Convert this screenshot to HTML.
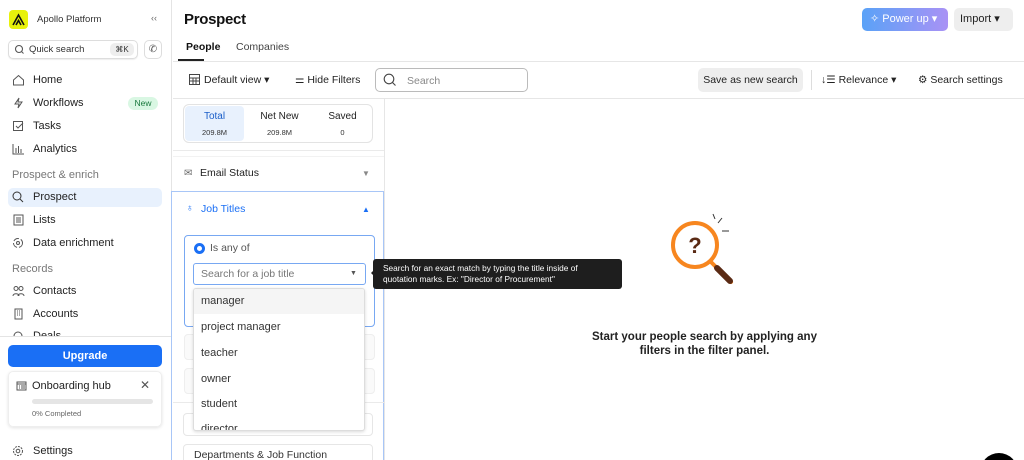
<!DOCTYPE html>
<html><head><meta charset="utf-8"><style>
*{box-sizing:border-box;margin:0;padding:0}
html,body{width:1024px;height:460px;overflow:hidden}
body{font-family:"Liberation Sans",sans-serif;color:#1a1a1a;background:#fff;position:relative;font-size:11px}
.a{position:absolute}
.nav{position:absolute;left:12px;font-size:11px;color:#222;display:flex;align-items:center}
.nav svg{margin-right:8px}
.sec{position:absolute;left:12px;color:#777;font-size:11px}
.item{position:absolute;left:201px;font-size:11px;color:#333}
</style></head><body>
<div class="a" style="left:0;top:0;width:172px;height:460px;background:#fff;border-right:1px solid #e4e4e4"></div>
<div class="a" style="left:9px;top:10px;width:19px;height:19px;background:#e8f20c;border-radius:4px"></div>
<svg class="a" style="left:12px;top:13px" width="13" height="13" viewBox="0 0 13 13"><path d="M1 12L6.5 2L12 12M4 12l2.5-4.5L9 12" fill="none" stroke="#111" stroke-width="1.6"/></svg>
<div class="a" style="left:37px;top:14px;font-size:9.5px;color:#333">Apollo Platform</div>
<div class="a" style="left:151px;top:13px;font-size:9px;color:#666">‹‹</div>
<div class="a" style="left:8px;top:40px;width:130px;height:19px;border:1px solid #ddd;border-radius:5px;box-shadow:0 1px 1px #eee"></div>
<svg class="a" style="left:14px;top:44px" width="11" height="11"><circle cx="5" cy="5" r="3.5" fill="none" stroke="#555" stroke-width="1.1"/><path d="M7.5 7.5l2 2" stroke="#555"/></svg>
<div class="a" style="left:29px;top:44px;font-size:9.5px;color:#333">Quick search</div>
<div class="a" style="left:110px;top:43px;width:24px;height:13px;background:#eee;border-radius:5px;font-size:8px;text-align:center;line-height:13px;color:#333">⌘K</div>
<div class="a" style="left:144px;top:40px;width:18px;height:19px;border:1px solid #ddd;border-radius:5px;font-size:10px;text-align:center;line-height:17px;color:#555">✆</div>
<div class="nav" style="top:74px"><svg width="13" height="12"><path d="M1.5 6L6.5 1.5L11.5 6V11H1.5Z" fill="none" stroke="#555"/></svg>Home</div>
<div class="nav" style="top:97px"><svg width="13" height="12"><path d="M7 1L3 7h4l-1 4 4-6H6z" fill="none" stroke="#555"/></svg>Workflows</div>
<div class="a" style="left:128px;top:97px;width:30px;height:13px;background:#d9f7e3;border-radius:7px;color:#1a7a3e;font-size:8.5px;text-align:center;line-height:13px">New</div>
<div class="nav" style="top:120px"><svg width="13" height="12"><path d="M1.5 1.5h9v9h-9zM4 6l2 2 5-5" fill="none" stroke="#555"/></svg>Tasks</div>
<div class="nav" style="top:143px"><svg width="13" height="12"><path d="M1 1v10h11M4 10V5M6.5 10V3M9 10V6" fill="none" stroke="#555"/></svg>Analytics</div>
<div class="sec" style="top:169px">Prospect &amp; enrich</div>
<div class="a" style="left:8px;top:188px;width:154px;height:19px;background:#e8f1fd;border-radius:5px"></div>
<div class="nav" style="top:191px"><svg width="13" height="12"><circle cx="5" cy="5" r="4" fill="none" stroke="#333"/><path d="M8 8l3 3" stroke="#333"/></svg>Prospect</div>
<div class="nav" style="top:214px"><svg width="13" height="12"><path d="M2 1h9v10H2zM4 4h5M4 6h5M4 8h5" fill="none" stroke="#555"/></svg>Lists</div>
<div class="nav" style="top:237px"><svg width="13" height="12"><circle cx="6" cy="6" r="4.5" fill="none" stroke="#555" stroke-dasharray="6 2"/><circle cx="6" cy="6" r="1.5" fill="none" stroke="#555"/></svg>Data enrichment</div>
<div class="sec" style="top:263px">Records</div>
<div class="nav" style="top:285px"><svg width="13" height="12"><circle cx="4" cy="3.5" r="2" fill="none" stroke="#555"/><circle cx="9" cy="3.5" r="2" fill="none" stroke="#555"/><path d="M1 11c0-3 6-3 6 0M6 11c0-3 6-3 6 0" fill="none" stroke="#555"/></svg>Contacts</div>
<div class="nav" style="top:308px"><svg width="13" height="12"><path d="M3 1h7v10H3zM5 3h1M7 3h1M5 5h1M7 5h1M5 7h1M7 7h1" fill="none" stroke="#555"/></svg>Accounts</div>
<div class="nav" style="top:330px;height:6px;overflow:hidden;align-items:flex-start"><svg width="13" height="12"><circle cx="6" cy="6" r="4" fill="none" stroke="#555"/></svg>Deals</div>
<div class="a" style="left:0;top:336px;width:171px;height:124px;background:#fff;border-top:1px solid #e4e4e4"></div>
<div class="a" style="left:8px;top:345px;width:154px;height:22px;background:#1a6ff5;border-radius:5px;color:#fff;font-size:11px;font-weight:bold;text-align:center;line-height:22px">Upgrade</div>
<div class="a" style="left:8px;top:371px;width:154px;height:56px;border:1px solid #eee;border-radius:5px;box-shadow:0 1px 3px #e3e3e3"></div>
<svg class="a" style="left:16px;top:380px" width="11" height="11"><path d="M1 2h9v8H1zM1 4h9M3 6h1M5 6h4M3 8h1M5 8h4" fill="none" stroke="#555"/></svg>
<div class="a" style="left:32px;top:380px;font-size:11px;color:#222">Onboarding hub</div>
<div class="a" style="left:140px;top:378px;font-size:12px;color:#555">✕</div>
<div class="a" style="left:32px;top:399px;width:121px;height:5px;background:#e5e5e5;border-radius:3px"></div>
<div class="a" style="left:32px;top:409px;font-size:7.5px;color:#666">0% Completed</div>
<div class="nav" style="top:445px"><svg width="13" height="12"><circle cx="6" cy="6" r="4.5" fill="none" stroke="#555" stroke-dasharray="2 1"/><circle cx="6" cy="6" r="1.8" fill="none" stroke="#555"/></svg>Settings</div>

<div class="a" style="left:184px;top:11px;font-size:15px;font-weight:bold;color:#111;letter-spacing:-.3px">Prospect</div>
<div class="a" style="left:862px;top:8px;width:86px;height:23px;border-radius:5px;background:linear-gradient(90deg,#5aa2f7,#a992f5);color:#fff;font-size:11px;line-height:23px;padding-left:8px">✧ Power up ▾</div>
<div class="a" style="left:954px;top:8px;width:59px;height:23px;border-radius:5px;background:#eee;font-size:11px;line-height:23px;padding-left:6px;color:#222">Import ▾</div>
<div class="a" style="left:186px;top:41px;font-size:10.5px;font-weight:bold;color:#111">People</div>
<div class="a" style="left:236px;top:41px;font-size:10.5px;color:#444">Companies</div>
<div class="a" style="left:178px;top:59px;width:26px;height:2px;background:#222"></div>
<div class="a" style="left:173px;top:61px;width:851px;height:1px;background:#e6e6e6"></div>
<svg class="a" style="left:189px;top:74px" width="11" height="11"><path d="M.5.5h10v10H.5zM.5 4h10M.5 7h10M4 4v7M7 4v7" fill="none" stroke="#444"/></svg>
<div class="a" style="left:204px;top:74px;font-size:10.5px;color:#222">Default view ▾</div>
<div class="a" style="left:295px;top:74px;font-size:10.5px;color:#222">⚌ Hide Filters</div>
<div class="a" style="left:375px;top:68px;width:153px;height:24px;border:1px solid #bbb;border-radius:5px"></div>
<svg class="a" style="left:383px;top:73px" width="14" height="14"><circle cx="6" cy="6" r="4.8" fill="none" stroke="#444" stroke-width="1.1"/><path d="M9.5 9.5l3 3" stroke="#444" stroke-width="1.1"/></svg>
<div class="a" style="left:407px;top:75px;font-size:10.5px;color:#888">Search</div>
<div class="a" style="left:698px;top:68px;width:105px;height:24px;background:#eee;border-radius:5px;font-size:10.5px;line-height:24px;text-align:center;color:#222">Save as new search</div>
<div class="a" style="left:811px;top:70px;width:1px;height:20px;background:#ddd"></div>
<div class="a" style="left:821px;top:74px;font-size:10.5px;color:#222">↓☰ Relevance ▾</div>
<div class="a" style="left:918px;top:74px;font-size:10.5px;color:#222">⚙ Search settings</div>
<div class="a" style="left:173px;top:98px;width:851px;height:1px;background:#e6e6e6"></div>
<div class="a" style="left:384px;top:99px;width:1px;height:361px;background:#e6e6e6"></div>
<div class="a" style="left:183px;top:104px;width:190px;height:39px;border:1px solid #e3e3e3;border-radius:6px"></div>
<div class="a" style="left:185px;top:106px;width:59px;height:35px;background:#e8f1fd;border-radius:4px"></div>
<div class="a" style="left:185px;top:111px;width:59px;text-align:center;color:#1a5ec9;font-size:10px">Total</div>
<div class="a" style="left:185px;top:128px;width:59px;text-align:center;color:#333;font-size:7.5px">209.8M</div>
<div class="a" style="left:250px;top:111px;width:59px;text-align:center;color:#222;font-size:10px">Net New</div>
<div class="a" style="left:250px;top:128px;width:59px;text-align:center;color:#333;font-size:7.5px">209.8M</div>
<div class="a" style="left:313px;top:111px;width:59px;text-align:center;color:#222;font-size:10px">Saved</div>
<div class="a" style="left:313px;top:128px;width:59px;text-align:center;color:#333;font-size:7.5px">0</div>
<div class="a" style="left:173px;top:150px;width:211px;height:1px;background:#eaeaea"></div>
<div class="a" style="left:173px;top:156px;width:211px;height:1px;background:#f2f2f2"></div>
<div class="a" style="left:184px;top:168px;font-size:10px;color:#666">✉</div>
<div class="a" style="left:200px;top:167px;font-size:10.5px;color:#222">Email Status</div>
<div class="a" style="left:362px;top:169px;font-size:8px;color:#888">▼</div>
<div class="a" style="left:171px;top:191px;width:213px;height:269px;border:1px solid #a8c6f7;border-bottom:none"></div>
<div class="a" style="left:186px;top:203px;font-size:10px;color:#1a6ff5">♁</div>
<div class="a" style="left:201px;top:203px;font-size:10.5px;color:#1a6ff5">Job Titles</div>
<div class="a" style="left:362px;top:205px;font-size:8px;color:#1a6ff5">▲</div>
<div class="a" style="left:184px;top:235px;width:191px;height:92px;border:1px solid #78a8f2;border-radius:4px"></div>
<div class="a" style="left:194px;top:243px;width:11px;height:11px;border:3px solid #1a6ff5;border-radius:50%"></div>
<div class="a" style="left:210px;top:242px;font-size:10.5px;color:#555">Is any of</div>
<div class="a" style="left:193px;top:263px;width:173px;height:22px;border:1px solid #78a8f2;border-radius:3px"></div>
<div class="a" style="left:201px;top:268px;font-size:10.5px;color:#777">Search for a job title</div>
<div class="a" style="left:350px;top:270px;font-size:7px;color:#555">▼</div>
<div class="a" style="left:184px;top:334px;width:191px;height:26px;border:1px solid #eee;border-radius:4px;background:#fafafa"></div>
<div class="a" style="left:184px;top:368px;width:191px;height:26px;border:1px solid #eee;border-radius:4px;background:#fafafa"></div>
<div class="a" style="left:173px;top:402px;width:211px;height:1px;background:#eaeaea"></div>
<div class="a" style="left:183px;top:413px;width:190px;height:23px;border:1px solid #e6e6e6;border-radius:4px"></div>
<div class="a" style="left:183px;top:444px;width:190px;height:23px;border:1px solid #e6e6e6;border-radius:4px"></div>
<div class="a" style="left:194px;top:449px;font-size:10.5px;color:#333">Departments &amp; Job Function</div>
<div class="a" style="left:193px;top:288px;width:172px;height:143px;background:#fff;border:1px solid #ddd;border-radius:3px;box-shadow:0 1px 3px rgba(0,0,0,.15);overflow:hidden">
<div style="height:25px;background:#f5f5f5"></div></div>
<div class="item" style="top:295px">manager</div>
<div class="item" style="top:321px">project manager</div>
<div class="item" style="top:347px">teacher</div>
<div class="item" style="top:373px">owner</div>
<div class="item" style="top:398px">student</div>
<div class="a" style="left:201px;top:423px;font-size:11px;color:#333;height:7px;overflow:hidden">director</div>
<div class="a" style="left:366px;top:268px;width:0;height:0;border:5px solid transparent;border-right-color:#1e1e1e"></div>
<div class="a" style="left:373px;top:259px;width:249px;height:30px;background:#1e1e1e;border-radius:3px;color:#fff;font-size:8.3px;line-height:11px;padding:4px 0 0 10px;white-space:nowrap">Search for an exact match by typing the title inside of<br>quotation marks. Ex: "Director of Procurement"</div>
<svg class="a" style="left:660px;top:205px" width="90" height="90" viewBox="0 0 90 90">
<path d="M53 9l2 5M58 18l4-5M62 26h7" stroke="#333" stroke-width="1"/>
<path d="M49 55l22 22" stroke="#f7861f" stroke-width="4" stroke-linecap="round"/>
<path d="M57 63l13 13" stroke="#5a2a14" stroke-width="6" stroke-linecap="round"/>
<circle cx="35" cy="40" r="22" fill="#fff" stroke="#f7861f" stroke-width="4"/>
<text x="35" y="48" font-family="Liberation Sans" font-size="22" font-weight="bold" fill="#5a2a14" text-anchor="middle">?</text>
</svg>
<div class="a" style="left:385px;top:330px;width:639px;text-align:center;font-size:11.5px;font-weight:bold;color:#222;line-height:14px">Start your people search by applying any<br>filters in the filter panel.</div>
<div class="a" style="left:980px;top:453px;width:38px;height:38px;border-radius:50%;background:#000"></div>
</body></html>
